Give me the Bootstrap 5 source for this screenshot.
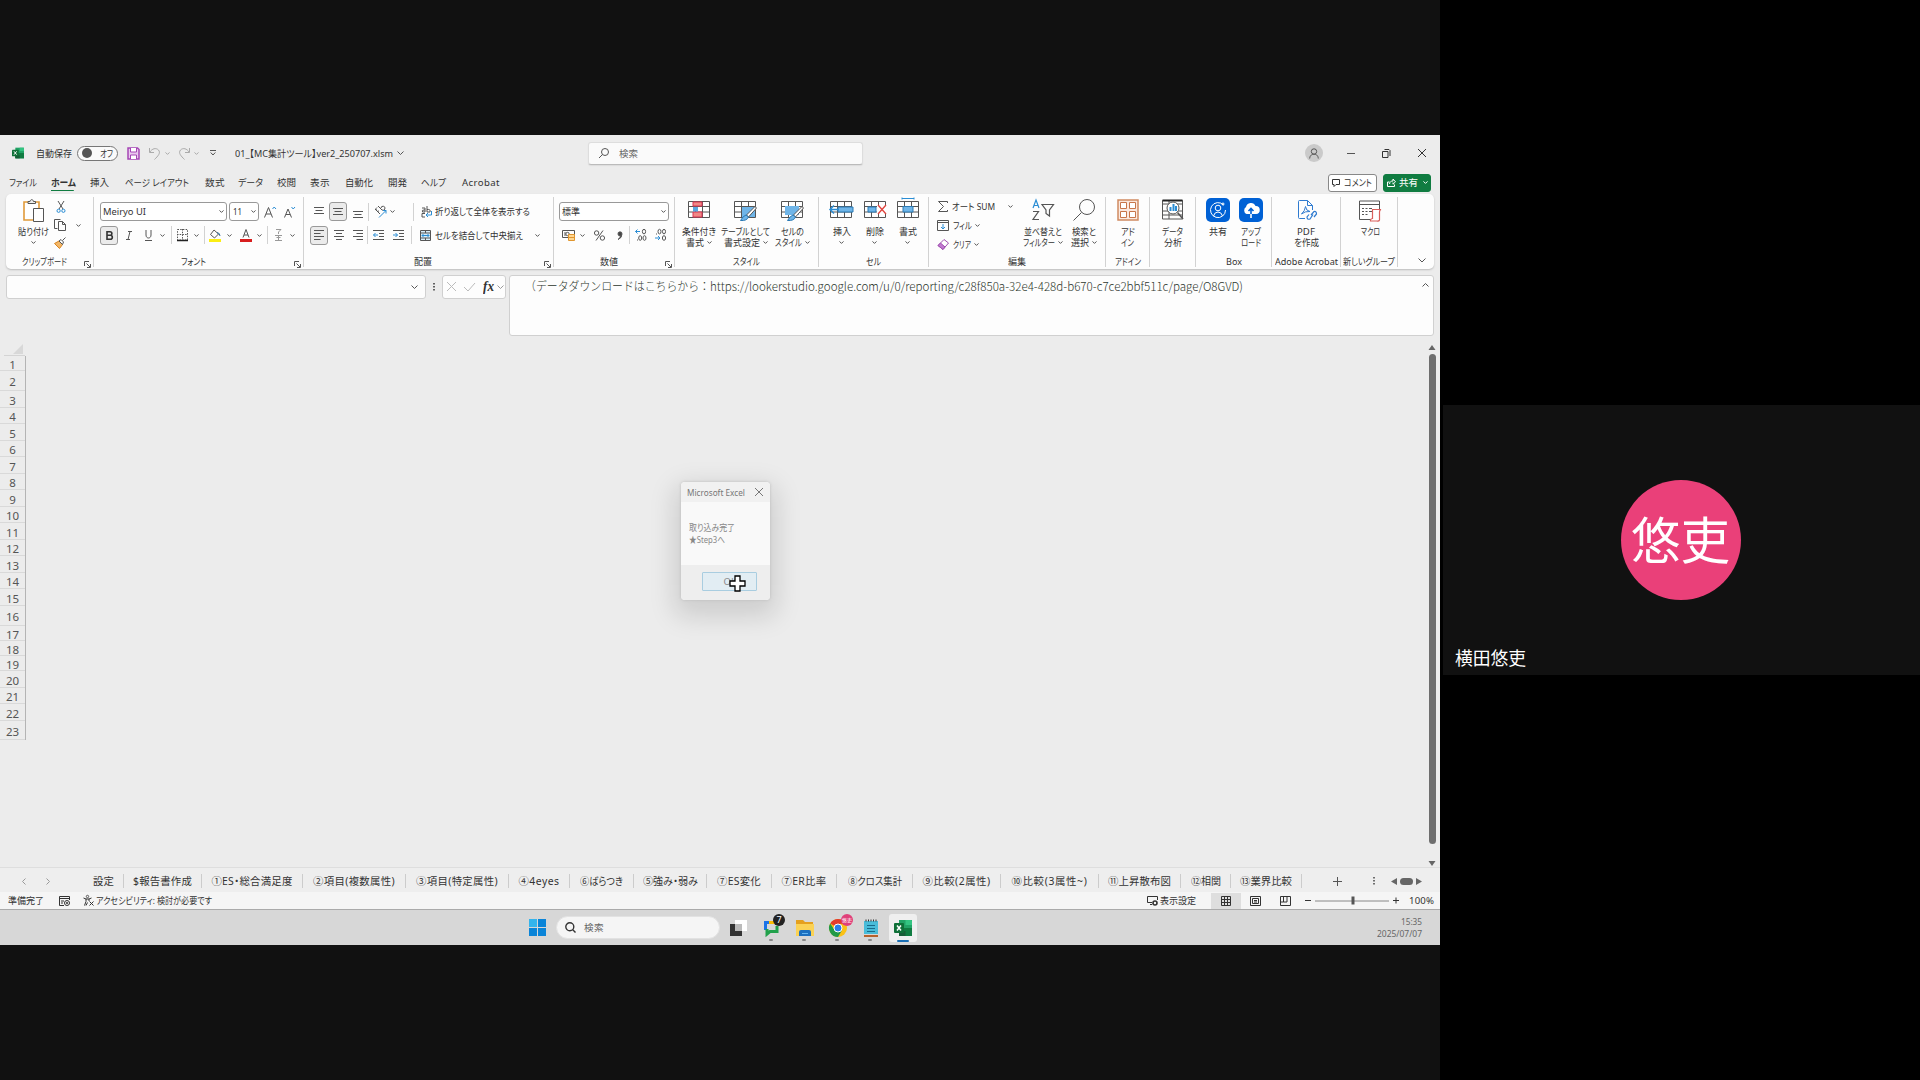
<!DOCTYPE html>
<html lang="ja">
<head>
<meta charset="utf-8">
<title>01_【MC集計ツール】ver2_250707.xlsm</title>
<link href="https://cdn.jsdelivr.net/npm/bootstrap@5.3.0/dist/css/bootstrap.min.css" rel="stylesheet">
<style>
html,body{height:1080px;overflow:hidden;background:#000}
body{width:1920px;font-family:"Noto Sans","Noto Sans CJK JP",sans-serif;font-size:9.6px;line-height:11px;color:#333;font-feature-settings:"palt"}
svg{display:block;flex:none;overflow:visible;fill:none;stroke:#555;stroke-width:1}
[data-w]{display:inline-block;white-space:nowrap;flex:none;transform-origin:0 50%}
.share-area{width:1440px;height:1080px;background:#111;padding-top:135px;position:relative}
.win{height:775px;background:#ececec}
.titlebar{height:35px;padding-top:1px}
.toggle{width:41px;height:15px;border:1px solid #777;border-radius:8px;background:#fafafa;padding-left:4px}
.knob{width:10px;height:10px;border-radius:50%;background:#555}
.finder{width:275px;height:23px;margin-left:184px;background:#fafafa;border:1px solid #ddd;border-bottom-color:#bbb;border-radius:3px;box-shadow:0 1px 1px #ddd}
.person{width:18px;height:18px;border-radius:50%;background:#cacaca}
.menubar{height:24px;padding:1px 0 0 1px}
.menubar .on{font-weight:700;border-bottom:1.5px solid #107c41;padding-bottom:1px;margin-top:2px;line-height:12px}
.pill-btn{height:18px;border:1px solid #888;border-radius:3px;background:#fff;width:49px}
.pill-btn.go{background:#107c41;border-color:#107c41;color:#fff;width:48px}
.ribbon{display:grid;grid-template-columns:87px 210px 250px 121px 144px 110px 177px 44px 46px 76px 69px 57px 1fr;height:75px;margin:0 6px;background:#fdfdfd;border-radius:5px;box-shadow:0 1px 2px #bbb;padding:3px 0 4px 1px}
.rgroup{border-right:1px solid #d2d2d2;display:flex;flex-direction:column;position:relative;min-width:0}
.rgroup:last-child{border:0}
.rbody{height:59px;flex:none}
.rlabel{height:11px;display:flex;justify-content:center;align-items:center}
.rlabel.la{padding-right:11px}
.launch{position:absolute;right:2px;bottom:-1px}
.rrow{display:flex;align-items:center;height:24px}
.rtop{padding-top:1px}
.rnext{margin-top:2px}
.pick{height:19px;border:1px solid #999;border-radius:3px;background:#fff;display:flex;align-items:center;justify-content:space-between;padding:0 2px}
.p127{width:127px}.p30{width:30px}.p110{width:110px}
.boxed{width:18px;height:19px;border:1px solid #999;border-radius:3px;background:#ebebeb;display:flex;align-items:center;justify-content:center}
.vline{width:1px;height:18px;background:#d2d2d2;flex:none}
.big{display:flex;flex-direction:column;align-items:center;flex:none}
.big .pic{height:25px;padding-top:2px}
.b33{width:33px}.b47{width:47px}.b42{width:42px}.b34{width:34px}
.fxrow{height:66px;padding-top:6px}
.fbox{background:#fdfdfd;border:1px solid #d0d0d0;border-radius:3px;height:23.5px}
.namebox{width:420px}.fxbox{width:64px}
.fentry{width:925px;height:61px;font-family:"Noto Sans CJK JP",sans-serif;font-size:12px;font-weight:300;line-height:14px;padding:3px 2px 0 15px;color:#2c362c;font-feature-settings:normal}
.fname{font-family:"Liberation Serif",serif;font-size:15px}
.sheet{height:532px}
.rowhead{width:26px;border-right:1px solid #b4b4b4;font-size:11.5px;color:#555;text-align:center}
.rowhead div{border-bottom:1px solid #d9d9d9;display:flex;align-items:center;justify-content:center;padding-top:2px}
.r15{height:15px}.r16{height:16px}.r17{height:17px}.r19{height:19px}.r20{height:20px}
.vbar{width:12px;padding-top:10px}
.thumb{width:7px;height:490px;border-radius:4px;background:#6e6e6e;margin-top:3px;margin-left:.5px}
.tabstrip{height:25px;border-top:1px solid #dedede;background:#eee;font-size:10.4px;padding-top:2px}
.stabs{display:grid;grid-template-columns:40px 78px 101px 103px 103px 61px 64px 73px 65px 65px 76px 88px 98px 82px 50px 71px;height:14px;margin-left:34px}
.stabs div{border-right:1px solid #ccc;display:flex;align-items:center;justify-content:center}
.hthumb{width:13px;height:7px;border-radius:4px;background:#666}
.status{height:18px;background:#f5f5f5;border-bottom:1px solid #aaa}
.viewon{width:30px;height:16px;background:#dedede}
.taskbar{height:35px;background:#d7d7d7}
.tsearch{width:164px;height:23px;border-radius:12px;background:#f5f5f5;border:1px solid #e2e2e2}
.tsearch,.finder{color:#666}
#dock{margin-left:529px}
.app{height:35px;width:33px;position:relative;display:flex;align-items:center;justify-content:center}
.app.live::after{content:"";position:absolute;width:4px;height:2px;left:14px;top:29px;background:#888;border-radius:1px}
.app.front{width:28px;height:28px;background:#efefef;border-radius:3px}
.app.front::after{content:"";position:absolute;width:12px;height:2px;left:8px;bottom:0;background:#1a6fb5;border-radius:1px}
.bubble{position:absolute;width:12px;height:12px;border-radius:50%;right:3px;top:4px;background:#222;color:#fff;font-size:9px;line-height:12px;text-align:center}
.bubble.pk{background:#e0407a;font-size:5px;right:1px}
.clock{font-size:8.6px;line-height:12px;color:#666;text-align:right;margin-right:18px}
.msg{position:absolute;left:680.5px;top:482px;width:89px;height:118px;background:#f9f9f9;border-radius:4px;box-shadow:0 0 3px #bbb,0 10px 26px 7px rgba(0,0,0,.13);color:#888}
.msg-top{height:20px;background:#f1f1f1;border-radius:4px 4px 0 0;padding:0 7px 0 6px;color:#777}
.msg-body{height:63px;padding:20px 0 0 8px;line-height:11.5px}
.msg-foot{height:35px;background:#eee;border-radius:0 0 4px 4px;padding:7px 0 0 21px}
.okbtn{width:55px;height:19px;border:1px solid #a9cde0;border-radius:1px;background:#e2edf3;padding-left:21px;line-height:17px}
.cursor{position:absolute;left:729px;top:575px}
.tile{position:absolute;left:1443px;top:405px;width:477px;height:270px;background:#111;color:#fff;font-family:"Noto Sans CJK JP",sans-serif;font-feature-settings:normal}
.face{width:120px;height:120px;border-radius:50%;background:#ea4079;font-size:49.5px;line-height:115px;margin-right:1px}
.face span{margin-left:-1px}
.who{position:absolute;left:12px;bottom:8px;font-size:18px;line-height:20px}
.x1{margin-left:1px}.x2{margin-left:2px}.x3{margin-left:3px}.x4{margin-left:4px}.x5{margin-left:5px}.x6{margin-left:6px}.x7{margin-left:7px}.x8{margin-left:8px}.x9{margin-left:9px}.x10{margin-left:10px}.x11{margin-left:11px}.x12{margin-left:12px}.x13{margin-left:13px}.x14{margin-left:14px}.x15{margin-left:15px}.x16{margin-left:16px}.x18{margin-left:18px}.x19{margin-left:19px}.x20{margin-left:20px}.x22{margin-left:22px}.x24{margin-left:24px}.x27{margin-left:27px}.x31{margin-left:31px}
</style>
<script src="https://cdn.jsdelivr.net/npm/bootstrap@5.3.0/dist/js/bootstrap.bundle.min.js"></script>
</head>
<body>
<svg width="0" height="0" class="position-absolute">
<symbol id="cv" viewBox="0 0 5 3"><path d="M.5.4 2.500 2.400 4.500.4"/></symbol>
<symbol id="cw" viewBox="0 0 7 4"><path d="M.5.5 3.500 3.500 6.500.5"/></symbol>
<symbol id="ln" viewBox="0 0 7 7"><path d="M.5 5V.5H5M2.500 2.500 6 6M6.500 3V6.500H3"/></symbol>
<symbol id="al" viewBox="0 0 10 12"><path d="M0 1.500H10M0 4.500H6.500M0 7.500H10M0 10.500H6.500"/></symbol>
<symbol id="ac" viewBox="0 0 10 12"><path d="M0 1.500H10M2 4.500H8M0 7.500H10M2 10.500H8"/></symbol>
<symbol id="grid" viewBox="0 0 22 18"><path fill="#fff" d="M.5.5H21.500V16.500H.5ZM.5 5.500H21.500M.5 11H21.500M7.500.5V16.500M14.500.5V16.500"/></symbol>
<symbol id="mag" viewBox="0 0 10 10"><circle cx="6" cy="4" r="3.500"/><path d="M3.500 6.500 0 10"/></symbol>
<symbol id="xl" viewBox="0 0 18 16"><path stroke="none" fill="#21a366" d="M5 0H18V16H5Z"/><path stroke="none" fill="#107c41" d="M5 8H18V16H5Z"/><path stroke="none" fill="#33c481" d="M11.500 0H17a1 1 0 0 1 1 1V5H11.500Z"/><path stroke="none" fill="#185c37" d="M5 11H11.500V16H6a1 1 0 0 1-1-1Z"/><rect y="3" width="10" height="10" rx="1" stroke="none" fill="#0f7038"/><path stroke="#fff" stroke-width="1.500" d="M3 5.500 7 10.500M7 5.500 3 10.500"/></symbol>
</svg>
<div class="d-flex">
<main class="share-area">
<div class="win">
<header class="titlebar d-flex align-items-center">
<svg class="x12" width="12" height="12"><use href="#xl"/></svg>
<span class="x12" data-w="36">自動保存</span>
<div class="toggle x5 d-flex align-items-center"><span class="knob"></span><span class="x8" data-w="13">オフ</span></div>
<svg class="x9" width="13" height="13"><path stroke="#a545b5" stroke-width="1.500" fill="#e9c9ee" d="M1 1H10.500L12 2.500V12H1Z"/><path stroke="#a545b5" fill="#fff" d="M3.500 1V5H9.500V1M3.500 12V8H9.500V12"/></svg>
<svg class="x9" width="12" height="13"><path stroke="#aaa" d="M.5 1V5.500H5M.8 5.200C3 1.500 7 .5 9.500 3 12 6 9 9 5.500 12.500"/></svg>
<svg class="x4" width="5" height="3"><path stroke="#aaa" d="M.5.4 2.500 2.400 4.500.4"/></svg>
<svg class="x8" width="12" height="13"><path stroke="#aaa" d="M11.500 1V5.500H7M11.200 5.200C9 1.500 5 .5 2.500 3 0 6 3 9 6.500 12.500"/></svg>
<svg class="x4" width="5" height="3"><path stroke="#aaa" d="M.5.4 2.500 2.400 4.500.4"/></svg>
<svg class="x11" width="6" height="6"><path d="M0 .5H6M.7 2.500 3 5 5.300 2.500"/></svg>
<span class="x19" data-w="158">01_【MC集計ツール】ver2_250707.xlsm</span>
<svg class="x4" width="7" height="4"><use href="#cw"/></svg>
<div class="finder d-flex align-items-center"><svg class="x10" width="10" height="10"><use href="#mag"/></svg><span class="x10" data-w="19">検索</span></div>
<div class="person ms-auto d-flex justify-content-center align-items-center"><svg width="10" height="11"><circle cx="5" cy="3.500" r="2.700"/><path d="M.7 10.500C1 7 3 6.300 5 6.300S9 7 9.300 10.500"/></svg></div>
<svg class="x24" width="8" height="1"><path d="M0 .5H8"/></svg>
<svg class="x27" width="9" height="9"><path stroke="#333" d="M.5 2.500H6V8.500H.5ZM2.500.5H7L8 1.500V7"/></svg>
<svg class="x27 x-close" width="8" height="8"><path stroke="#333" d="M0 0 8 8M8 0 0 8"/></svg><i class="x14"></i>
</header>
<nav class="menubar d-flex align-items-center">
<span class="x8" data-w="28">ファイル</span><span class="x14 on" data-w="25">ホーム</span><span class="x14" data-w="19">挿入</span><span class="x16" data-w="64">ページ レイアウト</span><span class="x16" data-w="20">数式</span><span class="x13" data-w="25">データ</span><span class="x14" data-w="19">校閲</span><span class="x14" data-w="20">表示</span><span class="x15" data-w="28">自動化</span><span class="x15" data-w="19">開発</span><span class="x14" data-w="25">ヘルプ</span><span class="x16" data-w="38">Acrobat</span>
<div class="pill-btn d-flex align-items-center ms-auto"><svg class="x3" width="8" height="8"><path stroke="#333" d="M.5.5H7.500V5.500H4L2 7.500V5.500H.5Z"/></svg><span class="x4" data-w="28">コメント</span></div>
<div class="pill-btn go x6 d-flex align-items-center"><svg class="x3" width="9" height="9"><path stroke="#fff" d="M2.500 4H.5V8.500H7.500V6.500M2.500 6C3 3.500 4 3 6 3V1L8.500 3.800 6 6.200V4.500"/></svg><span class="x3" data-w="19">共有</span><svg class="x5" width="5" height="3"><path stroke="#fff" d="M.5.4 2.500 2.400 4.500.4"/></svg></div><i class="x9"></i>
</nav>
<section class="ribbon">
<div class="rgroup"><div class="rbody d-flex">
<div class="big b33 x10"><div class="pic"><svg width="21" height="23"><path stroke="#e09a3a" stroke-width="1.600" fill="#fff" d="M1 3H16V21H1Z"/><path fill="#eee" d="M5 4.500V2.500H7C7.500 0 10 0 10.500 2.500H12.500V4.500Z"/><path fill="#fff" d="M10.500 9.500H20.500V22.500H10.500Z"/></svg></div><span class="mt-1" data-w="31">貼り付け</span><svg class="mt-1" width="5" height="3"><use href="#cv"/></svg></div>
<div class="x4">
<div class="rrow h-auto pt-1"><svg class="x3" width="8" height="12"><path d="M1 0 6 8M7 0 2 8"/><circle stroke="#2a8dd4" cx="1.600" cy="9.800" r="1.600"/><circle stroke="#2a8dd4" cx="6.400" cy="9.800" r="1.600"/></svg></div>
<div class="rrow rnext h-auto pt-1"><svg width="12" height="12"><path d="M3.500 9.500H.5V.5H6.500M4.500 2.500H8.500L11.500 5.500V11.500H4.500ZM8.500 2.500V5.500H11.500"/></svg><svg class="x10" width="5" height="3"><use href="#cv"/></svg></div>
<div class="rrow rnext h-auto pt-1"><svg width="12" height="12"><path stroke="#d98421" fill="#f3b767" d="M.5 6.500 5 4 8.500 7.500 5.500 11.500Z"/><path fill="#fff" d="M5 4 7 2.500 9.500 5 8.500 7.500ZM8.500 3.500 11.500.5"/></svg></div>
</div></div><div class="rlabel la"><span data-w="45">クリップボード</span></div><svg class="launch" width="7" height="7"><use href="#ln"/></svg></div>

<div class="rgroup"><div class="rbody pt-1">
<div class="rrow rtop h-auto"><div class="pick p127 x6"><span data-w="43">Meiryo UI</span><svg width="5" height="3"><use href="#cv"/></svg></div><div class="pick p30 x2"><span data-w="9" class="x1">11</span><svg width="5" height="3"><use href="#cv"/></svg></div>
<svg class="x5" width="12" height="12"><path d="M.5 11.500 4.500 1.500 8.500 11.500M2 8H7"/><path stroke="#2a8dd4" d="M8.500 3 10.200 1 12 3"/></svg><svg class="x8" width="12" height="12"><path d="M.5 11.500 4 3 7.500 11.500M2 8.500H6"/><path stroke="#2a8dd4" d="M7.500 1 9.200 3 11 1"/></svg></div>
<div class="rrow rnext"><div class="boxed x6"><svg width="7" height="9"><path stroke="#333" stroke-width="1.600" d="M1 .8H4C6.500.8 6.500 4.300 4 4.300H1ZM1 4.300H4.300C7 4.300 7 8.300 4.300 8.300H1Z"/></svg></div>
<svg class="x8" width="6" height="9"><path d="M2 .5H6M0 8.500H4M4 .5 2 8.500"/></svg>
<svg class="x13" width="7" height="11"><path d="M1 0V5C1 9 6 9 6 5V0M0 10.500H7"/></svg><svg class="x8" width="5" height="3"><use href="#cv"/></svg><i class="vline x6"></i>
<svg class="x5" width="11" height="12"><path stroke-dasharray="1.500 1.200" d="M.5.5H10.500V11H.5ZM5.500 0V11M0 5.500H11"/><path stroke="#222" stroke-width="1.500" d="M0 11.500H11"/></svg><svg class="x6" width="5" height="3"><use href="#cv"/></svg><i class="vline x5"></i>
<svg class="x4" width="12" height="13"><path d="M5 1 9.500 5 5.500 9 1.500 5.500Z"/><path stroke="#2a6d9d" d="M8 3.500Q11 4 11 7"/><path stroke="#fbee14" stroke-width="3" d="M0 11.500H12"/></svg><svg class="x6" width="5" height="3"><use href="#cv"/></svg>
<svg class="x8" width="12" height="13"><path d="M3 8.500 6 .5 9 8.500M4 6H8"/><path stroke="#d81e1e" stroke-width="3" d="M0 11.500H12"/></svg><svg class="x5" width="5" height="3"><use href="#cv"/></svg><i class="vline x5"></i>
<svg class="x7" width="7" height="12"><path stroke="#999" d="M1 .5H6L3.500 3V5M0 6.500H7M1.500 8.500H5.500M0 11.500H7M3.500 6V11"/></svg><svg class="x8" width="5" height="3"><use href="#cv"/></svg></div>
</div><div class="rlabel la"><span data-w="25">フォント</span></div><svg class="launch" width="7" height="7"><use href="#ln"/></svg></div>

<div class="rgroup"><div class="rbody pt-1">
<div class="rrow rtop h-auto"><svg class="x10" width="10" height="12"><path d="M0 1.500H10M1.500 4.500H8.500M0 7.500H10"/></svg><div class="boxed x5"><svg width="10" height="10"><path d="M0 1.500H10M1.500 4.500H8.500M0 7.500H10"/></svg></div><svg class="x6" width="10" height="12"><path d="M0 5.500H10M1.500 8.500H8.500M0 11.500H10"/></svg><i class="vline x5"></i>
<svg class="x5" width="13" height="12"><path d="M1 3 6 8M3 1.500A2 2 0 1 0 5 5M4 0 8 4A2 2 0 1 0 7 2"/><path stroke="#2a8dd4" d="M5 11.500 12 4.500M9 4.500H12V7.500"/></svg><svg class="x3" width="5" height="3"><use href="#cv"/></svg><i class="vline x18"></i>
<svg class="x7" width="11" height="12"><path d="M1 2H4V6H1.500Q0 4 4 3.800M6 0V6H9Q10 3 6 3.500M4 7.500H1V11H4"/><path stroke="#2a8dd4" d="M10.500 5V9H5M7 7 5 9 7 11"/></svg><span class="x3" data-w="95">折り返して全体を表示する</span></div>
<div class="rrow rnext"><div class="boxed x6"><svg width="10" height="12"><use href="#al"/></svg></div><svg class="x6" width="10" height="12"><use href="#ac"/></svg><svg class="x9" width="10" height="12"><path d="M0 1.500H10M3.500 4.500H10M0 7.500H10M3.500 10.500H10"/></svg><i class="vline x4"></i>
<svg class="x5" width="11" height="11"><path d="M0 .5H11M6 3.500H11M6 6.500H11M0 9.500H11"/><path stroke="#2a8dd4" d="M5 5H.5M2.500 3 .5 5 2.500 7"/></svg><svg class="x9" width="11" height="11"><path d="M0 .5H11M6 3.500H11M6 6.500H11M0 9.500H11"/><path stroke="#2a8dd4" d="M0 5H4.500M2.500 3 4.500 5 2.500 7"/></svg><i class="vline x7"></i>
<svg class="x8" width="11" height="11"><path fill="#d8eefa" d="M.5.5H10.500V10.500H.5ZM5.500.5V3M5.500 8V10.500M.5 3H10.500M.5 8H10.500"/><path stroke="#2a8dd4" d="M2 5.500H9M3.500 4 2 5.500 3.500 7M7.500 4 9 5.500 7.500 7"/></svg><span class="x4" data-w="88">セルを結合して中央揃え</span><svg class="x12" width="5" height="3"><use href="#cv"/></svg></div>
</div><div class="rlabel la"><span data-w="18">配置</span></div><svg class="launch" width="7" height="7"><use href="#ln"/></svg></div>

<div class="rgroup"><div class="rbody pt-1">
<div class="rrow rtop h-auto"><div class="pick p110 x5"><span data-w="18">標準</span><svg width="5" height="3"><use href="#cv"/></svg></div></div>
<div class="rrow rnext"><svg class="x8" width="13" height="11"><path d="M.5.5H12.500V7.500H.5ZM3 2V6"/><circle cx="5.500" cy="4" r="1.700"/><path stroke="#e0962f" fill="#ffd793" d="M6.500 4.500H12.500V10.500H6.500ZM6.500 7.500H12.500"/></svg><svg class="x5" width="5" height="3"><use href="#cv"/></svg>
<svg class="x9" width="11" height="11"><circle cx="2.600" cy="3" r="2.200"/><circle cx="8.400" cy="8" r="2.200"/><path d="M9 .5 2 10.500"/></svg><svg class="x12" width="6" height="9"><path fill="#444" d="M5 3A2 2 0 1 0 3.500 4.800Q3.500 7 1 8.500Q5 7 5 3Z"/></svg><i class="vline x6"></i>
<svg class="x5" width="12" height="12"><path stroke="#2a8dd4" d="M5 2.500H.5M2.500.5.5 2.500 2.500 4.500"/><ellipse cx="9" cy="2.600" rx="1.600" ry="2.300"/><ellipse cx="5.200" cy="9" rx="1.500" ry="2.300"/><ellipse cx="9.500" cy="9" rx="1.500" ry="2.300"/><path d="M2 11H3"/></svg>
<svg class="x8" width="12" height="12"><path stroke="#2a8dd4" d="M0 9H5M3 7 5 9 3 11"/><ellipse cx="4.500" cy="2.600" rx="1.500" ry="2.300"/><ellipse cx="9" cy="2.600" rx="1.500" ry="2.300"/><ellipse cx="9" cy="9" rx="1.600" ry="2.300"/><path d="M1 5H2"/></svg></div>
</div><div class="rlabel la"><span data-w="18">数値</span></div><svg class="launch" width="7" height="7"><use href="#ln"/></svg></div>

<div class="rgroup"><div class="rbody d-flex">
<div class="big b47"><div class="pic pt-1"><svg width="22" height="18"><use href="#grid" width="22" height="18"/><path fill="#ef8a86" stroke="#d35" d="M5 1H14V5H5ZM5 11H14V16H5Z"/><path fill="#5aa7e0" stroke="none" d="M5 6H10V10.500H5Z"/></svg></div><span class="mt-1" data-w="34">条件付き</span><div class="d-flex align-items-center"><span data-w="18">書式</span><svg class="x3" width="5" height="3"><use href="#cv"/></svg></div></div>
<div class="big b47"><div class="pic pt-1"><svg width="23" height="20"><use href="#grid" width="22" height="18"/><path fill="#6fb5e8" stroke="none" d="M8 6H21V16H8Z"/><path fill="#fff" d="M21 5.500 12.500 14 14.500 16 22.500 7Z"/><path fill="#6fb5e8" stroke="#2a7ab5" d="M12 14Q9 15 6.500 19.500Q13 20 14.500 16Z"/></svg></div><span class="mt-1" data-w="49">テーブルとして</span><div class="d-flex align-items-center"><span data-w="36">書式設定</span><svg class="x3" width="5" height="3"><use href="#cv"/></svg></div></div>
<div class="big b47"><div class="pic pt-1"><svg width="23" height="20"><use href="#grid" width="22" height="18"/><path fill="#6fb5e8" stroke="none" d="M4 5H18V14H4Z"/><path fill="#fff" d="M21 5.500 12.500 14 14.500 16 22.500 7Z"/><path fill="#6fb5e8" stroke="#2a7ab5" d="M12 14Q9 15 6.500 19.500Q13 20 14.500 16Z"/></svg></div><span class="mt-1" data-w="23">セルの</span><div class="d-flex align-items-center"><span data-w="27">スタイル</span><svg class="x3" width="5" height="3"><use href="#cv"/></svg></div></div>
</div><div class="rlabel"><span data-w="27">スタイル</span></div></div>

<div class="rgroup"><div class="rbody d-flex"><i class="x6"></i>
<div class="big b33"><div class="pic pt-1"><svg width="24" height="18"><use href="#grid" width="22" height="18"/><path fill="#6fb5e8" stroke="#2a7ab5" d="M8 6H23V11H8Z"/><path stroke="#2a8dd4" stroke-width="1.500" d="M9 8.500H0M4 4.500 0 8.500 4 12.500"/></svg></div><span class="mt-1" data-w="18">挿入</span><svg class="mt-1" width="5" height="3"><use href="#cv"/></svg></div>
<div class="big b33"><div class="pic pt-1"><svg width="22" height="18"><use href="#grid" width="22" height="18"/><path fill="#6fb5e8" stroke="#2a7ab5" d="M4 6H12V11H4Z"/><path fill="#fff" stroke="none" d="M13 4H22V13H13Z"/><path stroke="#e0423c" stroke-width="1.300" d="M14 4 22 13M22 4 14 13"/></svg></div><span class="mt-1" data-w="18">削除</span><svg class="mt-1" width="5" height="3"><use href="#cv"/></svg></div>
<div class="big b33"><div class="pic pt-1"><svg width="22" height="18"><use href="#grid" width="22" height="18"/><path fill="#6fb5e8" stroke="#2a7ab5" d="M6 5.500H16V11H6Z"/><path stroke="#2a8dd4" d="M5 -2.500H17M5 -3.500V-1.500M17 -3.500V-1.500"/></svg></div><span class="mt-1" data-w="18">書式</span><svg class="mt-1" width="5" height="3"><use href="#cv"/></svg></div>
</div><div class="rlabel"><span data-w="15">セル</span></div></div>

<div class="rgroup"><div class="rbody d-flex">
<div class="x8">
<div class="rrow h-auto pt-1"><svg class="x1" width="10" height="11"><path d="M9.500 2V.5H.5L5.500 5.500.5 10.500H9.500V9"/></svg><span class="x4" data-w="43">オート SUM</span><svg class="x13" width="5" height="3"><use href="#cv"/></svg></div>
<div class="rrow h-auto pt-2"><svg width="12" height="11"><path d="M.5.5H11.500V10.500H.5ZM.5 2.500H11.500"/><path stroke="#2a8dd4" d="M6 4V9M4 7 6 9 8 7"/></svg><span class="x4" data-w="19">フィル</span><svg class="x3" width="5" height="3"><use href="#cv"/></svg></div>
<div class="rrow h-auto pt-2"><svg width="12" height="11"><path fill="#fff" stroke="#a04fb0" d="M7 .5 11.500 4 6 10.500 1 6.500Z"/><path fill="#c17bd0" stroke="#a04fb0" d="M3.500 4 8 8 6 10.500 1 6.500Z"/></svg><span class="x4" data-w="18">クリア</span><svg class="x3" width="5" height="3"><use href="#cv"/></svg></div>
</div>
<div class="big b42 x9"><div class="pic"><svg width="22" height="22"><path stroke="#2a8dd4" stroke-width="1.200" d="M1 9 4 1 7 9M2 6.500H6"/><path stroke-width="1.200" d="M1 12.500H6.500L1 20.500H7M10 5.500H21.500L17.500 11V17L14 14.500V11Z"/></svg></div><span class="mt-1" data-w="38">並べ替えと</span><div class="d-flex align-items-center"><span data-w="32">フィルター</span><svg class="x3" width="5" height="3"><use href="#cv"/></svg></div></div>
<div class="big b34 x3"><div class="pic"><svg width="23" height="22"><circle cx="14" cy="8" r="7.500"/><path d="M8.500 13.500.5 21.500"/></svg></div><span class="mt-1" data-w="24">検索と</span><div class="d-flex align-items-center"><span data-w="18">選択</span><svg class="x3" width="5" height="3"><use href="#cv"/></svg></div></div>
</div><div class="rlabel"><span data-w="18">編集</span></div></div>

<div class="rgroup"><div class="rbody"><div class="big"><div class="pic"><svg width="22" height="22"><path stroke="#d08a62" stroke-width="1.500" fill="#fbe9df" d="M1 1H21V21H1Z"/><path stroke="#c8764a" fill="#fff" d="M3.500 3.500H9.500V9.500H3.500ZM12.500 3.500H18.500V9.500H12.500ZM3.500 12.500H9.500V18.500H3.500ZM12.500 12.500H18.500V18.500H12.500Z"/></svg></div><span class="mt-1" data-w="14">アド</span><span data-w="13">イン</span></div></div><div class="rlabel"><span data-w="26">アドイン</span></div></div>

<div class="rgroup"><div class="rbody"><div class="big"><div class="pic"><svg width="22" height="22"><path d="M.5 1.500H20.500V20H.5ZM.5 5H20.500M.5 12H20.500M.5 16H20.500M7 1V20"/><path stroke="#222" stroke-width="2" d="M.5 1.500H20.500"/><circle cx="11" cy="9" r="6" fill="#fff"/><path d="M15.500 13.500 21 20" stroke-width="1.600"/><path stroke="#2a8dd4" stroke-width="2" d="M8.500 8V12M11.500 5V12M14 7V12"/></svg></div><span class="mt-1" data-w="21">データ</span><span data-w="18">分析</span></div></div><div class="rlabel"></div></div>

<div class="rgroup"><div class="rbody d-flex"><i class="x5"></i>
<div class="big b33"><div class="pic"><svg width="24" height="24"><rect width="24" height="24" y="-1" rx="5" fill="#0061d5" stroke="none"/><path stroke="#fff" d="M17.500 6A7.500 7.500 0 1 0 19.500 11M17 3.500V6.500M15.500 5H18.500M7.500 17Q8.500 13 12 13T16.500 17"/><circle cx="12" cy="9" r="2.800" stroke="#fff"/></svg></div><span class="mt-1" data-w="18">共有</span></div>
<div class="big b33"><div class="pic"><svg width="24" height="24"><rect width="24" height="24" y="-1" rx="5" fill="#0061d5" stroke="none"/><path fill="#fff" stroke="none" d="M7.500 15A4 4 0 0 1 7 8 5 5 0 0 1 16.500 7 4 4 0 0 1 17 15Z"/><path stroke="#0061d5" stroke-width="1.600" d="M12 15V9.500M9.500 12 12 9.500 14.500 12"/><path stroke="#fff" stroke-width="1.600" d="M12 15V19"/></svg></div><span class="mt-1" data-w="20">アップ</span><span data-w="20">ロード</span></div>
</div><div class="rlabel"><span data-w="16">Box</span></div></div>

<div class="rgroup"><div class="rbody"><div class="big"><div class="pic"><svg class="x3" width="20" height="22"><path stroke="#2f7bd0" d="M7 19.500H1.500Q.5 19.500.5 18.500V2.500Q.5 1.500 1.500 1.500H9.500L14.500 6.500V11M9.500 1.500V6.500H14.500M3.500 15Q7 12 7.500 7.500Q8 12 12 12.500Q7 12 3.500 15"/><path stroke="#2f7bd0" stroke-width="1.200" d="M13 16 16 12.500Q18.500 12 18.500 15L16 18M15 15.500 12 20Q9 21 9 18L11 15.500"/></svg></div><span class="mt-1" data-w="18">PDF</span><span data-w="25">を作成</span></div></div><div class="rlabel"><span data-w="63">Adobe Acrobat</span></div></div>

<div class="rgroup"><div class="rbody"><div class="big"><div class="pic"><svg class="x3" width="23" height="22"><path fill="#fff" d="M.5 2H20.500V20.500H.5ZM.5 5.500H20.500"/><path stroke-dasharray="2 1.500" d="M3 9.500H9M3 12.500H9M3 15.500H9"/><path d="M10 9.500H13M10 12.500H13"/><path stroke="#d9605c" stroke-width="1.200" fill="#fff" d="M13.500 10.500H22Q20.500 11 20.500 13V21Q20 22.500 17.500 22H11.500Q11 20 13.500 19.500Z"/></svg></div><span class="mt-1 x2" data-w="19">マクロ</span></div></div><div class="rlabel"><span data-w="52">新しいグループ</span></div></div>
<div class="rgroup"><svg class="mt-auto mb-1 ms-auto me-2" width="8" height="5"><path d="M.5.5 4 4 7.500.5"/></svg></div>
</section>
<section class="fxrow d-flex align-items-start">
<div class="fbox namebox x6 d-flex align-items-center justify-content-end pe-1"><svg class="x1" width="7" height="4"><use href="#cw"/></svg><i class="x3"></i></div>
<svg class="x7" width="2" height="23"><path stroke="#333" stroke-width="1.500" stroke-dasharray="1.500 1.500" d="M1 8V16"/></svg>
<div class="fbox fxbox x7 d-flex align-items-center"><svg class="x4" width="9" height="9"><path stroke="#bbb" d="M0 0 9 9M9 0 0 9"/></svg><svg class="x8" width="11" height="8"><path stroke="#bbb" d="M0 4 4 8 11 0"/></svg><b class="x8 fst-italic fname" data-w="11">fx</b><svg class="x3" width="7" height="4"><path stroke="#999" d="M.5.5 3.500 3.500 6.500.5"/></svg></div>
<div class="fbox fentry x3 d-flex"><span data-w="185">（データダウンロードはこちらから：</span><span data-w="533">https://lookerstudio.google.com/u/0/reporting/c28f850a-32e4-428d-b670-c7ce2bbf511c/page/O8GVD)</span><svg class="ms-auto mt-1 me-0" width="9" height="4"><path d="M.5 3.500 3.500.5 6.500 3.500"/></svg></div>
</section>
<section class="sheet d-flex justify-content-between">
<div>
<svg width="26" height="21"><path fill="#d8d8d8" stroke="none" d="M23 9V19H13Z"/><path stroke="#d4d4d4" d="M4 20.500H25"/></svg>
<div class="rowhead"><div class="r15">1</div><div class="r20">2</div><div class="r17">3</div><div class="r16">4</div><div class="r17">5</div><div class="r16">6</div><div class="r17">7</div><div class="r16">8</div><div class="r17">9</div><div class="r16">10</div><div class="r17">11</div><div class="r16">12</div><div class="r17">13</div><div class="r16">14</div><div class="r17">15</div><div class="r20">16</div><div class="r15">17</div><div class="r15">18</div><div class="r15">19</div><div class="r17">20</div><div class="r16">21</div><div class="r17">22</div><div class="r19">23</div></div>
</div>
<div class="vbar"><svg width="8" height="6"><path fill="#666" stroke="none" d="M.5 5 4 0 7.500 5Z"/></svg><div class="thumb"></div><svg class="mt-3" width="8" height="6"><path fill="#666" stroke="none" d="M.5 1H7.500L4 6Z"/></svg></div>
</section>
<nav class="tabstrip d-flex align-items-center">
<svg class="x22" width="4" height="7"><path stroke="#999" d="M3.500.5.5 3.500 3.500 6.500"/></svg><svg class="x20" width="4" height="7"><path stroke="#999" d="M.5.5 3.500 3.500.5 6.500"/></svg>
<div class="stabs">
<div><span data-w="21">設定</span></div><div><span data-w="59">$報告書作成</span></div><div><span data-w="81">①ES・総合満足度</span></div><div><span data-w="82">②項目(複数属性)</span></div><div><span data-w="82">③項目(特定属性)</span></div><div><span data-w="41">④4eyes</span></div><div><span data-w="43">⑥ばらつき</span></div><div><span data-w="55">⑤強み・弱み</span></div><div><span data-w="44">⑦ES変化</span></div><div><span data-w="45">⑦ER比率</span></div><div><span data-w="54">⑧クロス集計</span></div><div><span data-w="68">⑨比較(2属性)</span></div><div><span data-w="76">⑩比較(3属性~)</span></div><div><span data-w="63">⑪上昇散布図</span></div><div><span data-w="30">⑫相関</span></div><div><span data-w="52">⑬業界比較</span></div>
</div>
<svg class="x31" width="9" height="9"><path d="M0 4.500H9M4.500 0V9"/></svg><svg class="x31" width="2" height="9"><path stroke="#444" stroke-width="1.500" stroke-dasharray="1.500 1.500" d="M1 0V8"/></svg>
<svg class="x16" width="6" height="7"><path fill="#666" stroke="none" d="M6 0V7L0 3.500Z"/></svg><span class="hthumb x3"></span><svg class="x3" width="6" height="7"><path fill="#666" stroke="none" d="M0 0V7L6 3.500Z"/></svg>
</nav>
<footer class="status d-flex align-items-center">
<span class="x8" data-w="36">準備完了</span><svg class="x15" width="11" height="10"><path stroke="#333" d="M.5.5H10.500V4M.5.5V9.500H5M.5 2.500H10.500M2 5H5M2 7H4"/><circle cx="8" cy="7" r="2.500" stroke="#333"/><circle cx="8" cy="7" r=".7" stroke="#333"/></svg>
<svg class="x13" width="11" height="11"><circle cx="4.500" cy="1.500" r="1.200"/><path stroke="#333" d="M.5 3 3 4V6.500L1.500 10.500M8.500 3 6 4V6M3 4H6M3 10.500 4.500 7.500M6.500 6.500 10.500 10.500M10.500 6.500 6.500 10.500"/></svg><span class="x2" data-w="116">アクセシビリティ: 検討が必要です</span>
<svg class="ms-auto" width="11" height="10"><path stroke="#333" d="M5 6.500H.5V.5H10.500V4M3 8.500H5"/><circle cx="8" cy="7" r="2" stroke="#333" stroke-width="1.600"/></svg><span class="x2" data-w="36">表示設定</span>
<div class="viewon x15 d-flex align-items-center justify-content-center"><svg width="10" height="10"><path stroke="#333" d="M.5.5H9.500V9.500H.5ZM.5 3.500H9.500M.5 6.500H9.500M3.500.5V9.500M6.500.5V9.500"/></svg></div>
<svg class="x9" width="11" height="10"><path stroke="#333" d="M.5.5H10.500V9.500H.5ZM2.500 2.500H8.500V7.500H2.500ZM4 4.500H7M4 6H7"/></svg>
<svg class="x19" width="11" height="10"><path stroke="#333" d="M.5.5H10.500V9.500H.5ZM3.500.5V6H.5M7 .5V6H3.500"/></svg>
<svg class="x14" width="94" height="9"><path stroke="#333" d="M0 4.500H6M88 4.500H94M91 1.500V7.500"/><path stroke="#888" d="M10 5H84"/><path stroke="#555" stroke-width="3" d="M48 .5V8.500"/></svg>
<span class="x10" data-w="25">100%</span><i class="x6"></i>
</footer>
</div>
<div class="taskbar d-flex align-items-center">
<div class="d-flex align-items-center" id="dock">
<svg width="17" height="17"><path fill="#0a84d8" stroke="none" d="M0 0H8V8H0ZM9 0H17V8H9ZM0 9H8V17H0ZM9 9H17V17H9Z"/><path fill="#35b4ec" stroke="none" d="M0 0H8V8H0Z"/></svg>
<div class="tsearch x10 d-flex align-items-center"><svg class="x8" width="11" height="11"><circle cx="4.800" cy="4.800" r="4" stroke="#333" stroke-width="1.400"/><path stroke="#333" stroke-width="1.400" d="M7.800 7.800 10.500 10.500"/></svg><span class="x8" data-w="20">検索</span></div>
<div class="app x2"><svg width="17" height="16"><path fill="#fff" stroke="none" d="M5 0H17V11H5Z"/><path fill="#333" stroke="none" d="M0 4H12V16H0Z"/><path fill="#bbb" stroke="none" d="M5 4H12V11H5Z"/></svg></div>
<div class="app live"><svg width="15" height="16"><path stroke="#1a73e8" stroke-width="3" d="M1.500 10V2.500H5"/><path stroke="#fbbc04" stroke-width="3" d="M5 2.500H11"/><path stroke="#21a14b" stroke-width="3" d="M13 6V11.500H6L3 14V9"/></svg><span class="bubble">7</span></div>
<div class="app live"><svg width="18" height="16"><path fill="#e5a01e" stroke="none" d="M0 0H7L9 2H17V7H0Z"/><path fill="#fbd255" stroke="none" d="M0 4H18V16H0Z"/><path fill="#1b6fc0" stroke="none" d="M3 16V12Q3 10 5 10H13Q15 10 15 12V16Z"/><path stroke="#64b5f0" d="M6 13.500H12"/></svg></div>
<div class="app live"><svg width="18" height="18"><circle cx="9" cy="9" r="9" fill="#fbc116" stroke="none"/><path fill="#e33b2e" stroke="none" d="M9 9 1.200 4.500A9 9 0 0 1 16.800 4.500L9 5Z"/><path fill="#229a48" stroke="none" d="M1.200 4.500A9 9 0 0 0 9 18L13 11.200 5.500 11Z"/><circle cx="9" cy="9" r="4" fill="#2b7de9" stroke="#fff"/></svg><span class="bubble pk">悠吏</span></div>
<div class="app live"><svg width="14" height="18"><path fill="#48bcd9" stroke="none" d="M0 2H14V15H0Z"/><path fill="#b5622d" stroke="none" d="M0 16H14V18H0Z"/><path stroke="#176b8a" d="M3 6.500H11M3 9.500H11M3 12.500H11"/><path stroke="#333" stroke-dasharray="1 1.500" stroke-width="2" d="M1.500 1.500H13"/></svg></div>
<div class="app front x2"><svg width="18" height="16"><use href="#xl"/></svg></div>
</div>
<div class="clock ms-auto"><div><span data-w="21">15:35</span></div><div><span data-w="45">2025/07/07</span></div></div>
</div>
<div class="msg"><div class="msg-top d-flex align-items-center justify-content-between"><span data-w="58">Microsoft Excel</span><svg width="8" height="8"><path stroke="#777" d="M0 0 8 8M8 0 0 8"/></svg></div>
<div class="msg-body"><div><span data-w="46">取り込み完了</span></div><div><span data-w="36">★Step3へ</span></div></div>
<div class="msg-foot"><div class="okbtn">OK</div></div></div>
<svg class="cursor" width="16" height="16"><path fill="#fff" stroke="#000" stroke-width="1.300" d="M6 1H11V6H16V11H11V16H6V11H1V6H6Z"/></svg>
</main>
<aside class="tile d-flex align-items-center justify-content-center"><div class="face text-center"><span>悠吏</span></div><div class="who"><span data-w="71">横田悠吏</span></div></aside>
</div>
<script>
// Fit each label to its column: condense wide kana, space out narrow text.
document.querySelectorAll('[data-w]').forEach(function(el){
  var target=+el.dataset.w, r=document.createRange();
  r.selectNodeContents(el);
  var natural=r.getBoundingClientRect().width;
  if(!natural)return;
  el.style.width=target+'px';
  if(natural>target)el.style.transform='scaleX('+(target/natural)+')';
  else el.style.letterSpacing=((target-natural)/el.textContent.length)+'px';
});
</script>
</body>
</html>
